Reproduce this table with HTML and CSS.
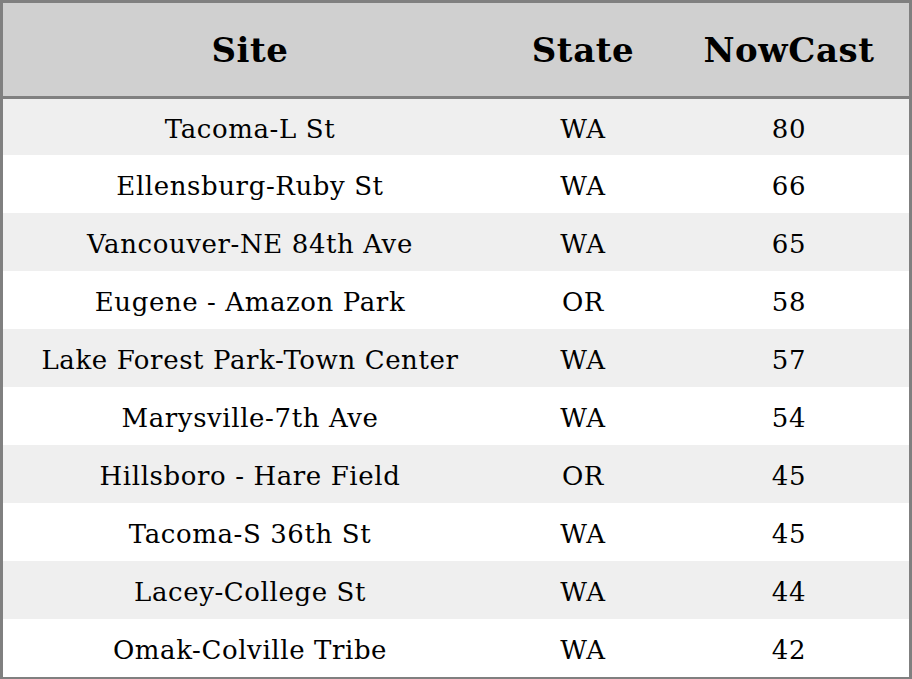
FILE: index.html
```html
<!DOCTYPE html>
<html>
<head>
<meta charset="utf-8">
<link rel="stylesheet" href="styles.css">
</head>
<body>
<table class="aq-table">
  <colgroup>
    <col class="col-site">
    <col class="col-state">
    <col class="col-now">
  </colgroup>
  <thead>
    <tr class="head-row"><th>Site</th><th>State</th><th>NowCast</th></tr>
  </thead>
  <tbody>
    <tr class="first"><td>Tacoma-L St</td><td>WA</td><td>80</td></tr>
    <tr><td>Ellensburg-Ruby St</td><td>WA</td><td>66</td></tr>
    <tr><td>Vancouver-NE 84th Ave</td><td>WA</td><td>65</td></tr>
    <tr><td>Eugene - Amazon Park</td><td>OR</td><td>58</td></tr>
    <tr><td>Lake Forest Park-Town Center</td><td>WA</td><td>57</td></tr>
    <tr><td>Marysville-7th Ave</td><td>WA</td><td>54</td></tr>
    <tr><td>Hillsboro - Hare Field</td><td>OR</td><td>45</td></tr>
    <tr><td>Tacoma-S 36th St</td><td>WA</td><td>45</td></tr>
    <tr><td>Lacey-College St</td><td>WA</td><td>44</td></tr>
    <tr><td>Omak-Colville Tribe</td><td>WA</td><td>42</td></tr>
  </tbody>
</table>
</body>
</html>
```

FILE: styles.css
```css
html, body {
  margin: 0;
  padding: 0;
  background: #ffffff;
}
.aq-table {
  width: 912px;
  border-collapse: separate;
  border-spacing: 0;
  border: 3px solid #808080;
  font-family: "DejaVu Serif", serif;
  color: #000;
  table-layout: fixed;
}
.col-site { width: 494px; }
.col-state { width: 172px; }
.col-now { width: 240px; }
.aq-table th {
  background: #d0d0d0;
  font-size: 34px;
  font-weight: bold;
  letter-spacing: 0.6px;
  height: 93px;
  padding: 0;
  text-align: center;
  border-bottom: 3px solid #808080;
}
.aq-table td {
  font-size: 26px;
  height: 55px;
  padding: 3px 0 0 0;
  text-align: center;
  letter-spacing: 0.6px;
}
.aq-table tr.first td { height: 53px; }
.aq-table tbody tr:nth-child(odd) td { background: #efefef; }
.aq-table tbody tr:nth-child(even) td { background: #ffffff; }
```
